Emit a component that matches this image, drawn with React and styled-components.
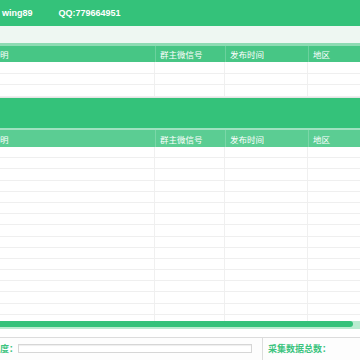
import React from 'react';
import styled, { createGlobalStyle } from 'styled-components';

const green = '#34c27a';

const GlobalStyle = createGlobalStyle`
  body {
    margin: 0;
    font-family: "Liberation Sans", "Noto Sans CJK SC", sans-serif;
    background: #ffffff;
    overflow: hidden;
  }
`;

const Page = styled.div`
  width: 360px;
  height: 360px;
  display: flex;
  flex-direction: column;
  overflow: hidden;
`;

const TopBar = styled.div`
  height: 26px;
  background: ${green};
  display: flex;
  align-items: center;
  color: #fff;
  font-size: 9px;
  font-weight: bold;
`;

const TopItem = styled.span`
  margin-left: ${(p) => p.$offset}px;
  white-space: nowrap;
`;

const Band = styled.div`
  height: 17px;
  background: #eef7f2;
`;

const Table = styled.div`
  border-top: ${(p) => (p.$second ? '2px solid #9fe2c0' : '3px solid #8edbb3')};
  display: flex;
  flex-direction: column;
`;

const Cols = styled.div`
  display: grid;
  grid-template-columns: 155px 70px 83px 1fr;
`;

const HeadRow = styled(Cols)`
  height: ${(p) => p.$h}px;
  background: ${(p) => p.$bg};
  color: #fff;
  font-size: 8.5px;
  align-items: center;
`;

const HeadCell = styled.div`
  padding-left: ${(p) => (p.$first ? 0 : 4)}px;
  white-space: nowrap;
  border-left: ${(p) => (p.$first ? 'none' : '1px solid rgba(255,255,255,0.2)')};
  height: 100%;
  display: flex;
  align-items: center;
`;

const Body = styled.div`
  height: ${(p) => p.$h}px;
  overflow: hidden;
`;

const Row = styled(Cols)`
  height: ${(p) => p.$h}px;
  box-sizing: border-box;
  border-bottom: 1px solid #efefef;
`;

const Cell = styled.div`
  border-right: 1px solid #f0f0f0;
  &:last-child {
    border-right: none;
  }
`;

const GreenBand = styled.div`
  height: 30px;
  background: ${green};
  border-top: 1px solid #e4e4e4;
`;

const ScrollTrack = styled.div`
  height: 8px;
  background: #b9ebd0;
  display: flex;
  flex-direction: column;
`;

const ScrollThumb = styled.div`
  width: 353px;
  height: 6px;
  background: ${green};
  border-radius: 0 3px 3px 0;
`;

const Spacer = styled.div`
  height: 8px;
`;

const Footer = styled.div`
  flex: 1;
  border-top: 1px solid #dcdcdc;
  display: flex;
  background: #fdfdfd;
`;

const FooterLeft = styled.div`
  width: 262px;
  border-right: 1px solid #dcdcdc;
  display: flex;
  align-items: center;
  padding-bottom: 2px;
`;

const Label = styled.span`
  color: #3cc47f;
  font-size: 9px;
  font-weight: bold;
  white-space: nowrap;
`;

const Input = styled.div`
  width: 232px;
  height: 7px;
  border: 1px solid #d6d6d6;
  background: #fff;
  box-shadow: inset 0 1px 1px #eee;
`;

const FooterRight = styled.div`
  display: flex;
  align-items: center;
  padding-left: 5px;
  padding-bottom: 2px;
`;

const headers = ['明', '群主微信号', '发布时间', '地区'];

const Rows = ({ count, h }) =>
  Array.from({ length: count }).map((_, i) => (
    <Row key={i} $h={h}>
      <Cell />
      <Cell />
      <Cell />
      <Cell />
    </Row>
  ));

const Head = ({ bg, h }) => (
  <HeadRow $bg={bg} $h={h}>
    {headers.map((t, i) => (
      <HeadCell key={t} $first={i === 0}>
        {t}
      </HeadCell>
    ))}
  </HeadRow>
);

export default function App() {
  return (
    <Page>
      <GlobalStyle />
      <TopBar>
        <TopItem $offset={2}>wing89</TopItem>
        <TopItem $offset={26}>QQ:779664951</TopItem>
      </TopBar>
      <Band />
      <Table>
        <Head bg="#47c685" h={16} />
        <Body $h={35}>
          <Rows count={4} h={11.5} />
        </Body>
      </Table>
      <GreenBand />
      <Table $second>
        <Head bg="#5bcd93" h={17} />
        <Body $h={174}>
          <Rows count={16} h={11.2} />
        </Body>
      </Table>
      <ScrollTrack>
        <ScrollThumb />
      </ScrollTrack>
      <Spacer />
      <Footer>
        <FooterLeft>
          <Label>度：</Label>
          <Input />
        </FooterLeft>
        <FooterRight>
          <Label>采集数据总数：</Label>
        </FooterRight>
      </Footer>
    </Page>
  );
}
